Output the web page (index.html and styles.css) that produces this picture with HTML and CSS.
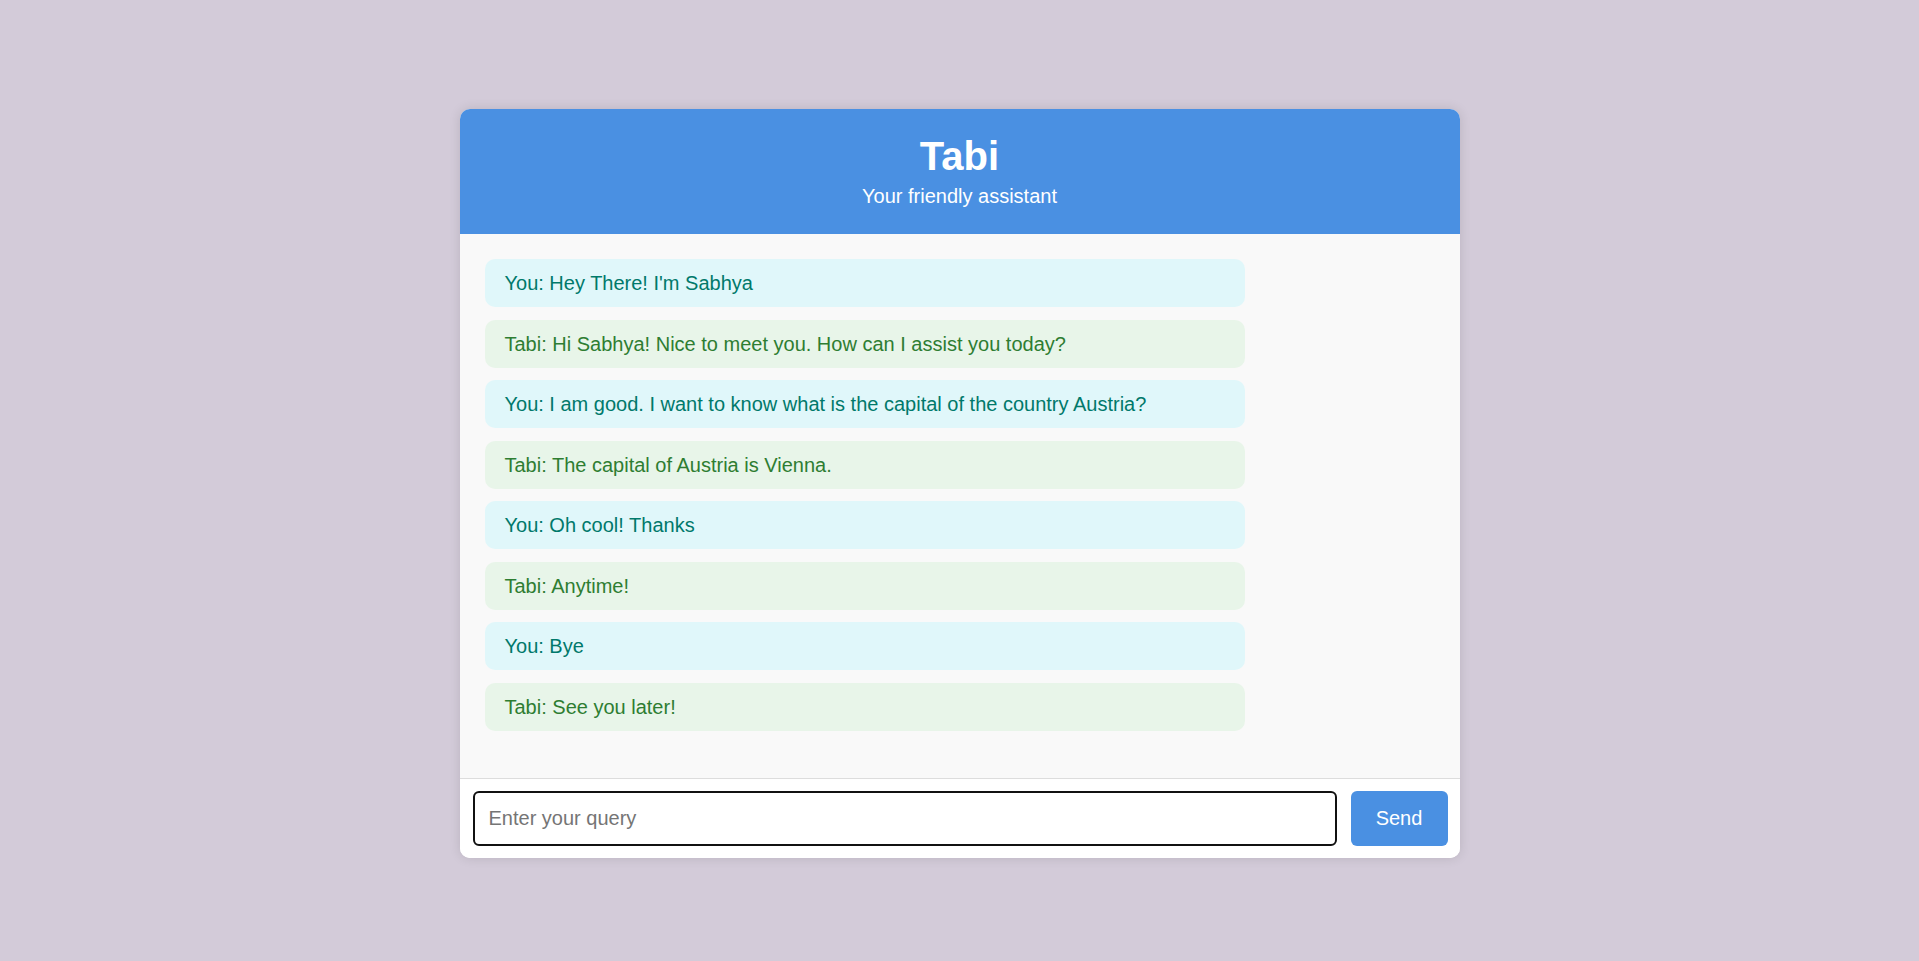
FILE: index.html
```html
<!DOCTYPE html>
<html lang="en">
<head>
<meta charset="utf-8">
<title>Tabi</title>
<link rel="stylesheet" href="styles.css">
</head>
<body>
<div class="chat">
  <header class="chat-header">
    <h1 class="title">Tabi</h1>
    <p class="subtitle">Your friendly assistant</p>
  </header>
  <main class="messages">
    <div class="msg user">You: Hey There! I'm Sabhya</div>
    <div class="msg bot">Tabi: Hi Sabhya! Nice to meet you. How can I assist you today?</div>
    <div class="msg user">You: I am good. I want to know what is the capital of the country Austria?</div>
    <div class="msg bot">Tabi: The capital of Austria is Vienna.</div>
    <div class="msg user">You: Oh cool! Thanks</div>
    <div class="msg bot">Tabi: Anytime!</div>
    <div class="msg user">You: Bye</div>
    <div class="msg bot">Tabi: See you later!</div>
  </main>
  <footer class="composer">
    <input class="query" type="text" placeholder="Enter your query">
    <button class="send" type="button">Send</button>
  </footer>
</div>
</body>
</html>
```

FILE: styles.css
```css
* { box-sizing: border-box; }

html, body {
  margin: 0;
  padding: 0;
}

body {
  background: #d3cbd9;
  font-family: Arial, "Liberation Sans", sans-serif;
  height: 961px;
  overflow: hidden;
}

.chat {
  width: 1000px;
  margin: 109px auto 0;
  background: #ffffff;
  border-radius: 10px;
  box-shadow: 0 0 12px rgba(0, 0, 0, 0.12);
  overflow: hidden;
  display: flex;
  flex-direction: column;
}

.chat-header {
  background: #4a90e2;
  color: #ffffff;
  height: 125px;
  text-align: center;
  padding-top: 24px;
}

.title {
  margin: 0;
  font-size: 40px;
  font-weight: bold;
  line-height: 46px;
}

.subtitle {
  margin: 6px 0 0;
  font-size: 20px;
  line-height: 22px;
}

.messages {
  background: #f9f9f9;
  height: 544px;
  padding: 25px;
  display: flex;
  flex-direction: column;
  gap: 12.5px;
}

.msg {
  width: 80%;
  padding: 13px 20px;
  border-radius: 10px;
  font-size: 20px;
  line-height: 22px;
}

.msg.user {
  background: #e0f7fa;
  color: #00796b;
}

.msg.bot {
  background: #e8f5e9;
  color: #2e7d32;
}

.composer {
  border-top: 1px solid #dddddd;
  background: #ffffff;
  padding: 12px 12px 12px 13px;
  display: flex;
  gap: 14px;
}

.query {
  flex: 1;
  height: 55px;
  border: 2px solid #111111;
  border-radius: 6px;
  padding: 0 14px;
  font-family: Arial, "Liberation Sans", sans-serif;
  font-size: 20px;
  color: #333333;
  outline: none;
}

.query::placeholder {
  color: #757575;
}

.send {
  width: 97px;
  height: 55px;
  border: none;
  border-radius: 6px;
  background: #4a90e2;
  color: #ffffff;
  font-family: Arial, "Liberation Sans", sans-serif;
  font-size: 20px;
}
```
